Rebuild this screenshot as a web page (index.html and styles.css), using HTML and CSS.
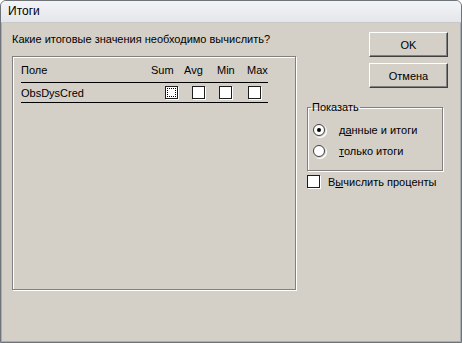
FILE: index.html
```html
<!DOCTYPE html>
<html lang="ru">
<head>
    <meta charset="UTF-8">
    <title>Итоги</title>
    <link rel="stylesheet" href="styles.css">
</head>
<body>
    <div class="window">
        <div class="titlebar">Итоги</div>
        <div class="content">
            <div class="left">
                <div class="question">Какие итоговые значения необходимо вычислить?</div>
                <div class="panel">
                    <div class="row head">
                        <span class="c-name">Поле</span>
                        <span class="h-sum">Sum</span>
                        <span class="h-avg">Avg</span>
                        <span class="h-min">Min</span>
                        <span class="h-max">Max</span>
                    </div>
                    <div class="row item">
                        <span class="c-name2">ObsDysCred</span>
                        <span class="check focus"></span>
                        <span class="check"></span>
                        <span class="check"></span>
                        <span class="check"></span>
                    </div>
                </div>
            </div>
            <div class="right">
                <button class="btn">OK</button>
                <button class="btn">Отмена</button>
                <fieldset class="group">
                    <legend>Показать</legend>
                    <div class="option"><span class="radio on"></span><span>д<u>а</u>нные и итоги</span></div>
                    <div class="option"><span class="radio"></span><span><u>т</u>олько итоги</span></div>
                </fieldset>
                <div class="percent"><span class="check"></span><span>В<u>ы</u>числить проценты</span></div>
            </div>
        </div>
    </div>
</body>
</html>
```

FILE: styles.css
```css
body {
    margin: 0;
    font-family: "Liberation Sans", Arial, sans-serif;
    font-size: 11px;
    color: #000;
    background: #fff;
}
.window {
    width: 460px;
    height: 341px;
    border: 1px solid #6d7379;
    border-radius: 6px 6px 0 0;
    background: #d4d0c8;
    overflow: hidden;
}
.titlebar {
    height: 21px;
    line-height: 21px;
    padding-left: 7px;
    font-size: 12px;
    background: linear-gradient(#f3f4f6, #e4e6eb);
    border-bottom: 1px solid #c9c9c9;
}
.content {
    display: flex;
    height: 318px;
    padding: 0 0 0 10px;
    border-left: 1px solid #a9acb0;
    border-right: 1px solid #a9acb0;
    border-bottom: 1px solid #a9acb0;
}
.left {
    width: 284px;
    flex-shrink: 0;
}
.question {
    margin-top: 10px;
    height: 13px;
    line-height: 13px;
}
.panel {
    box-sizing: border-box;
    margin-top: 10px;
    height: 234px;
    border: 1px solid #808080;
    box-shadow: inset 1px 1px 0 #fff, 1px 1px 0 #fff;
    padding: 0 27px 0 8px;
}
.row {
    display: flex;
    align-items: center;
    border-bottom: 1px solid #000;
}
.row span {
    flex-shrink: 0;
}
.head {
    height: 24px;
    padding-top: 1px;
}
.item {
    height: 19px;
}
.c-name { width: 130px; }
.h-sum { width: 33px; }
.h-avg { width: 33px; }
.h-min { width: 30px; }
.c-name2 { width: 144px; }
.check {
    display: inline-block;
    box-sizing: border-box;
    width: 13px;
    height: 13px;
    background: #fff;
    border: 1px solid #1e1e1e;
    box-shadow: 1px 1px 0 #fff;
    margin-right: 14px;
}
.item .check:nth-child(4) { margin-right: 16px; }
.item .check:last-child { margin-right: 0; }
.check.focus {
    outline: 1px dotted #000;
    outline-offset: -3px;
}
.right {
    margin-left: 11px;
    width: 142px;
}
.btn {
    display: block;
    width: 79px;
    height: 25px;
    margin: 9px 0 0 62px;
    padding: 0;
    font: inherit;
    background: #d4d0c8;
    border: 1px solid;
    border-color: #fff #404040 #404040 #fff;
    box-shadow: inset -1px -1px 0 #808080;
}
.btn + .btn {
    margin-top: 6px;
}
.group {
    width: 129px;
    margin: 13px 0 0;
    padding: 6px 0 0 5px;
    height: 62px;
    border: 1px solid #808080;
    box-shadow: inset 1px 1px 0 #fff, 1px 1px 0 #fff;
}
.group legend {
    padding: 0 1px;
    margin-left: -2px;
}
.option {
    display: flex;
    align-items: center;
    height: 21px;
}
.radio {
    display: inline-block;
    box-sizing: border-box;
    width: 12px;
    height: 12px;
    border-radius: 50%;
    background: #fff;
    border: 1px solid #404040;
    box-shadow: 0 0 0 1px #d4d0c8, 1px 1px 0 1px #fff;
    margin-right: 14px;
    position: relative;
}
.radio.on::after {
    content: "";
    position: absolute;
    left: 3px;
    top: 3px;
    width: 4px;
    height: 4px;
    border-radius: 50%;
    background: #000;
}
.percent {
    display: flex;
    align-items: center;
    margin-top: 4px;
}
.percent .check {
    margin-right: 8px;
}
u {
    text-decoration-thickness: 1px;
    text-underline-offset: 1px;
}
```
